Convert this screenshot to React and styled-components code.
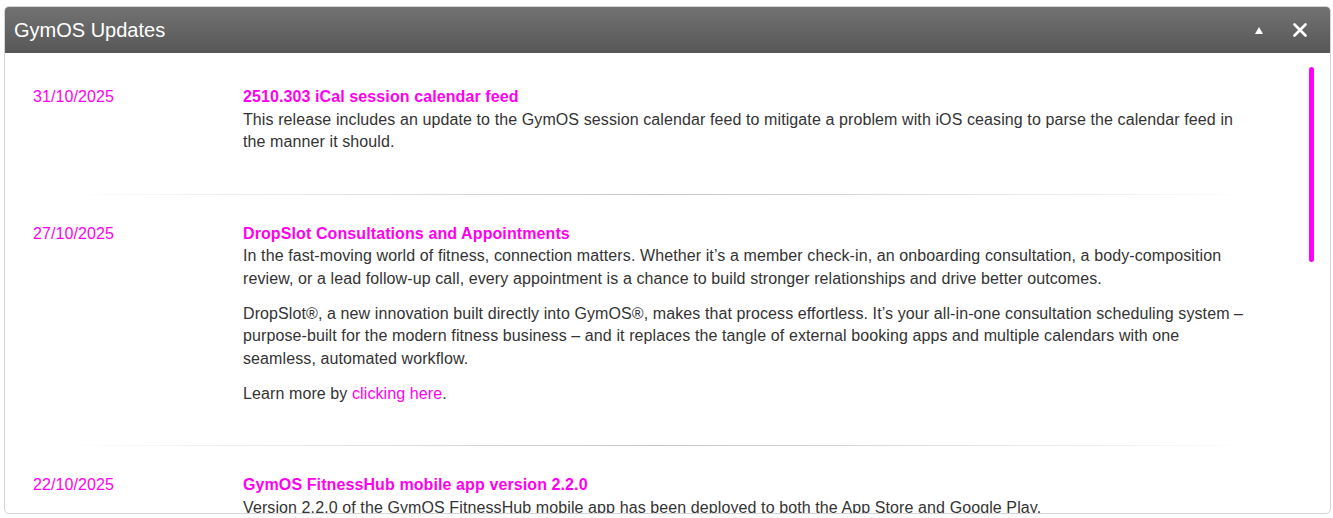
import React from "react";
import styled, { createGlobalStyle } from "styled-components";

const GlobalStyle = createGlobalStyle`
    html, body {
        margin: 0;
        padding: 0;
        background: #ffffff;
    }
    body {
        font-family: "Liberation Sans", Arial, sans-serif;
    }
`;

const Page = styled.div`
    height: 518px;
    padding: 6px 2px 4px 4px;
    box-sizing: border-box;
    overflow: hidden;
`;

const Window = styled.div`
    position: relative;
    height: 508px;
    display: flex;
    flex-direction: column;
    border: 1px solid #d6d6d6;
    border-radius: 5px;
    background: #ffffff;
    box-sizing: border-box;
    overflow: hidden;
`;

const Header = styled.div`
    flex: 0 0 46px;
    display: flex;
    align-items: center;
    padding: 0 22px 0 9px;
    background: linear-gradient(#727272, #575757);
    color: #ffffff;
`;

const Title = styled.h1`
    flex: 1;
    margin: 0;
    font-size: 20px;
    font-weight: normal;
    line-height: 1;
`;

const HeaderButton = styled.button`
    display: flex;
    align-items: center;
    justify-content: center;
    width: ${({ $size }) => $size}px;
    height: 20px;
    margin-left: ${({ $gap }) => $gap}px;
    padding: 0;
    border: none;
    background: none;
    cursor: pointer;
`;

const Scroller = styled.div`
    flex: 1;
    overflow-y: scroll;
    margin-right: 16px;
    scrollbar-width: none;
    &::-webkit-scrollbar {
        display: none;
    }
`;

/* the scroll thumb, drawn over the scroll area */
const ScrollThumb = styled.div`
    position: absolute;
    top: 60px;
    right: 16px;
    width: 5px;
    height: 195px;
    border-radius: 3px;
    background: #ff00ff;
`;

const List = styled.div`
    padding: 5px 0 40px 28px;
`;

const Item = styled.div`
    display: grid;
    grid-template-columns: 210px 1006px;
    padding: 28px 0 40px;
`;

const Divider = styled.hr`
    height: 1px;
    margin: 0 60px 0 30px;
    border: none;
    background: linear-gradient(to right, rgba(0, 0, 0, 0), #c4c4c4 50%, rgba(0, 0, 0, 0));
`;

const Date = styled.div`
    color: #ff00ee;
    font-size: 16px;
    line-height: 22.5px;
    letter-spacing: 0.1px;
`;

const Content = styled.div`
    color: #333333;
    font-size: 16px;
    line-height: 22.5px;
    letter-spacing: 0.1px;
`;

const ItemTitle = styled.h2`
    margin: 0;
    color: #ff00ee;
    font-size: 16px;
    font-weight: bold;
    line-height: 22.5px;
`;

const Para = styled.p`
    margin: 0 0 12.5px;
    &:last-child {
        margin-bottom: 0;
    }
`;

const Link = styled.a`
    color: #ff00ee;
    text-decoration: none;
`;

const updates = [
    {
        date: "31/10/2025",
        title: "2510.303 iCal session calendar feed",
        body: [
            "This release includes an update to the GymOS session calendar feed to mitigate a problem with iOS ceasing to parse the calendar feed in the manner it should.",
        ],
    },
    {
        date: "27/10/2025",
        title: "DropSlot Consultations and Appointments",
        body: [
            "In the fast-moving world of fitness, connection matters. Whether it\u2019s a member check-in, an onboarding consultation, a body-composition review, or a lead follow-up call, every appointment is a chance to build stronger relationships and drive better outcomes.",
            "DropSlot\u00ae, a new innovation built directly into GymOS\u00ae, makes that process effortless. It\u2019s your all-in-one consultation scheduling system \u2013 purpose-built for the modern fitness business \u2013 and it replaces the tangle of external booking apps and multiple calendars with one seamless, automated workflow.",
            "link",
        ],
    },
    {
        date: "22/10/2025",
        title: "GymOS FitnessHub mobile app version 2.2.0",
        body: [
            "Version 2.2.0 of the GymOS FitnessHub mobile app has been deployed to both the App Store and Google Play.",
        ],
    },
];

function App() {
    return (
        <>
            <GlobalStyle />
            <Page>
                <Window>
                    <Header>
                        <Title>GymOS Updates</Title>
                        <HeaderButton $size={10} $gap={0} aria-label="Collapse">
                            <svg width="8" height="7" viewBox="0 0 8 7">
                                <polygon points="4,0 8,7 0,7" fill="#ffffff" />
                            </svg>
                        </HeaderButton>
                        <HeaderButton $size={16} $gap={28} aria-label="Close">
                            <svg width="14" height="14" viewBox="0 0 14 14">
                                <path d="M1.5 1.5 L12.5 12.5 M12.5 1.5 L1.5 12.5" stroke="#ffffff" strokeWidth="2.6" strokeLinecap="round" />
                            </svg>
                        </HeaderButton>
                    </Header>
                    <Scroller>
                        <List>
                            {updates.map((u, i) => (
                                <React.Fragment key={u.date}>
                                    {i > 0 && <Divider />}
                                    <Item>
                                        <Date>{u.date}</Date>
                                        <Content>
                                            <ItemTitle>{u.title}</ItemTitle>
                                            {u.body.map((p, j) =>
                                                p === "link" ? (
                                                    <Para key={j}>
                                                        Learn more by <Link href="#">clicking here</Link>.
                                                    </Para>
                                                ) : (
                                                    <Para key={j}>{p}</Para>
                                                )
                                            )}
                                        </Content>
                                    </Item>
                                </React.Fragment>
                            ))}
                        </List>
                    </Scroller>
                    <ScrollThumb />
                </Window>
            </Page>
        </>
    );
}

export default App;
